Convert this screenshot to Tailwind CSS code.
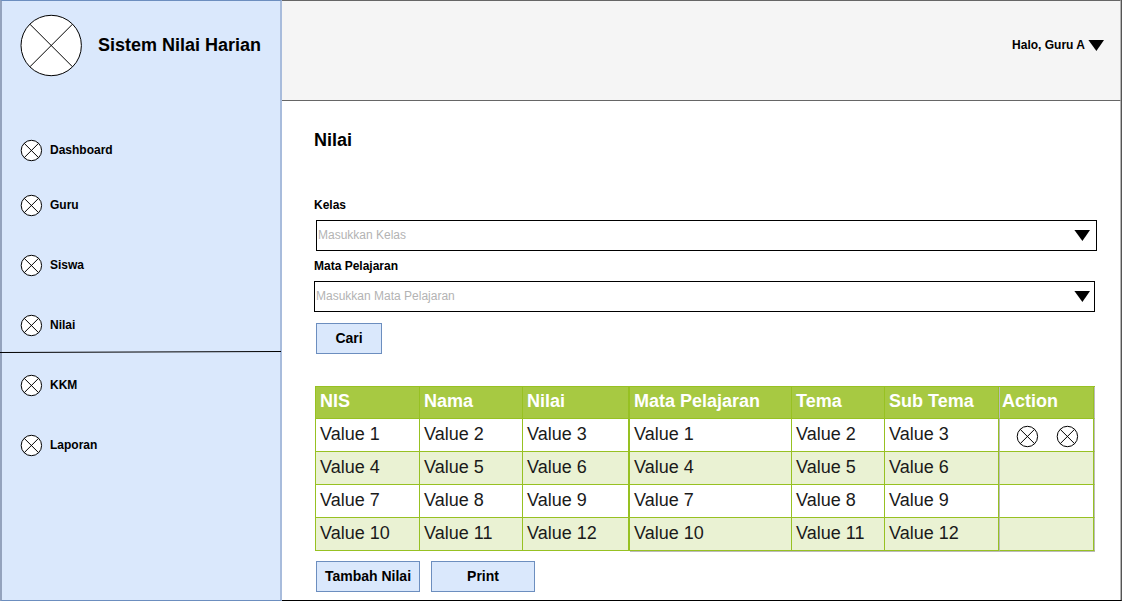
<!DOCTYPE html>
<html lang="id">
<head>
<meta charset="utf-8">
<meta name="viewport" content="width=device-width, initial-scale=1">
<title>Sistem Nilai Harian</title>
<script src="https://cdn.jsdelivr.net/npm/@tailwindcss/browser@4"></script>
</head>
<body class="flex min-h-screen bg-white font-['Liberation_Sans',Arial,sans-serif] text-xs text-black">
<svg class="hidden" aria-hidden="true">
  <symbol id="cross" viewBox="0 0 23 23">
    <circle cx="11.4" cy="11.5" r="10.2" fill="#fff" stroke="#000"/>
    <path d="M4.2 4.3 18.6 18.7M18.6 4.3 4.2 18.7" stroke="#000" fill="none"/>
  </symbol>
  <symbol id="down" viewBox="0 0 16 11"><path d="M.4 0H16L8.4 11Z" fill="#000"/></symbol>
</svg>

<aside class="flex w-[282px] shrink-0 flex-col border-x-2 border-y border-y-[#6c8ebf] border-r-[#a8bcdc] border-l-[#94a3bd] bg-[#dae8fc]">
  <div class="flex items-center gap-[15px] pt-[13px] pl-[18px]">
    <svg class="size-[63px] shrink-0" viewBox="0 0 63 63" aria-hidden="true">
      <circle cx="31.2" cy="31.5" r="30.2" fill="#fff" stroke="#000"/>
      <path d="M9.9 10.2 52.5 52.8M52.5 10.2 9.9 52.8" stroke="#000" fill="none"/>
    </svg>
    <span class="pb-[2px] text-lg/6 font-bold">Sistem Nilai Harian</span>
  </div>
  <nav class="mt-[62px] flex flex-col font-bold">
    <a href="#" class="ml-[18px] flex items-start gap-[7px]"><svg class="size-[23px]"><use href="#cross"/></svg><span class="pt-[3px]">Dashboard</span></a>
    <a href="#" class="mt-8 ml-[18px] flex items-start gap-[7px]"><svg class="size-[23px]"><use href="#cross"/></svg><span class="pt-[3px]">Guru</span></a>
    <a href="#" class="mt-[37px] ml-[18px] flex items-start gap-[7px]"><svg class="size-[23px]"><use href="#cross"/></svg><span class="pt-[3px]">Siswa</span></a>
    <a href="#" class="mt-[37px] ml-[18px] flex items-start gap-[7px]"><svg class="size-[23px]"><use href="#cross"/></svg><span class="pt-[3px]">Nilai</span></a>
    <svg class="mt-[14px] -ml-[2px] h-[2px] w-[281px]" viewBox="0 0 281 2" preserveAspectRatio="none" aria-hidden="true"><path d="M0 1.5 281 .5" stroke="#000" fill="none"/></svg>
    <a href="#" class="mt-[21px] ml-[18px] flex items-start gap-[7px]"><svg class="size-[23px]"><use href="#cross"/></svg><span class="pt-[3px]">KKM</span></a>
    <a href="#" class="mt-[37px] ml-[18px] flex items-start gap-[7px]"><svg class="size-[23px]"><use href="#cross"/></svg><span class="pt-[3px]">Laporan</span></a>
  </nav>
</aside>

<div class="flex min-w-0 flex-1 flex-col border-r border-b border-r-[#555] border-b-black">
  <header class="flex h-[101px] items-start justify-end border-y border-r border-y-[#666] border-r-[#b5b5b5] bg-[#f5f5f5] pt-9 pr-4">
    <button type="button" class="flex items-center gap-[3px] font-bold">Halo, Guru A<svg class="h-[11px] w-4" aria-hidden="true"><use href="#down"/></svg></button>
  </header>

  <main class="flex flex-1 flex-col border-r border-[#b5b5b5] pt-[27px] pr-[23px] pb-2 pl-8">
    <h1 class="text-lg/6 font-bold">Nilai</h1>

    <form class="mt-[45px] flex flex-col items-start">
      <label for="kelas" class="font-bold">Kelas</label>
      <div class="relative mt-[7px] w-full pl-[2px]">
        <select id="kelas" class="block h-[31px] w-full appearance-none border border-black bg-white pr-8 pb-[2px] pl-px text-[#b3b3b3]"><option>Masukkan Kelas</option></select>
        <svg class="pointer-events-none absolute top-[10px] right-[7px] h-[11px] w-4" aria-hidden="true"><use href="#down"/></svg>
      </div>
      <label for="mapel" class="mt-[7px] font-bold">Mata Pelajaran</label>
      <div class="relative mt-[7px] w-full pr-[2px]">
        <select id="mapel" class="block h-[31px] w-full appearance-none border border-black bg-white pr-8 pb-[2px] pl-px text-[#b3b3b3]"><option>Masukkan Mata Pelajaran</option></select>
        <svg class="pointer-events-none absolute top-[10px] right-[7px] h-[11px] w-4" aria-hidden="true"><use href="#down"/></svg>
      </div>
      <button type="button" class="mt-[11px] ml-[2px] h-[31px] w-[66px] border border-[#6c8ebf] bg-[#dae8fc] pb-[2px] text-sm font-bold">Cari</button>
    </form>

    <div class="mt-8 pr-[2px] pl-px">
      <table class="w-full table-fixed border-separate border-spacing-0 border-t border-l border-[#97c122] text-left text-lg [&_td]:border-r [&_td]:border-b [&_td]:border-[#97c122] [&_td]:p-0 [&_td]:pl-1 [&_td]:align-top [&_td]:leading-[30px] [&_td]:text-[#1a1a1a] [&_th]:border-r [&_th]:border-b [&_th]:border-[#97c122] [&_th]:pl-1 [&_th]:align-top [&_th]:leading-7 [&_tr>:nth-child(3)]:border-r-2 [&_tr>:nth-child(6)]:border-r-[#bbb] [&_tr>:nth-child(6)]:shadow-[inset_-1px_0_#97c122] [&_tr>:nth-child(7)]:border-r-[#bbb] [&_tr>:nth-child(7)]:shadow-[inset_-1px_0_#97c122] [&_tbody>tr:last-child>:nth-child(4)]:shadow-[0_1px_#bbb] [&_tbody>tr:last-child>:nth-child(5)]:shadow-[0_1px_#bbb] [&_tbody>tr:last-child>:nth-child(6)]:shadow-[inset_-1px_0_#97c122,0_1px_#bbb] [&_tbody>tr:last-child>:nth-child(7)]:shadow-[inset_-1px_0_#97c122,0_1px_#bbb]">
        <colgroup><col class="w-[104px]"><col class="w-[103px]"><col class="w-[107px]"><col class="w-[162px]"><col class="w-[93px]"><col class="w-[115px]"><col class="w-[95px]"></colgroup>
        <thead>
          <tr class="h-8 bg-[#a7c942] text-white"><th>NIS</th><th>Nama</th><th>Nilai</th><th>Mata Pelajaran</th><th>Tema</th><th>Sub Tema</th><th class="pl-[2px]!">Action</th></tr>
        </thead>
        <tbody>
          <tr class="h-[33px]"><td>Value 1</td><td>Value 2</td><td>Value 3</td><td>Value 1</td><td>Value 2</td><td>Value 3</td>
            <td><div class="flex gap-[17px] pt-[6px] pl-3"><button type="button" aria-label="Aksi 1"><svg class="size-[23px]"><use href="#cross"/></svg></button><button type="button" aria-label="Aksi 2"><svg class="size-[23px]"><use href="#cross"/></svg></button></div></td></tr>
          <tr class="h-[33px] bg-[#eaf2d3]"><td>Value 4</td><td>Value 5</td><td>Value 6</td><td>Value 4</td><td>Value 5</td><td>Value 6</td><td></td></tr>
          <tr class="h-[33px]"><td>Value 7</td><td>Value 8</td><td>Value 9</td><td>Value 7</td><td>Value 8</td><td>Value 9</td><td></td></tr>
          <tr class="h-[33px] bg-[#eaf2d3]"><td>Value 10</td><td>Value 11</td><td>Value 12</td><td>Value 10</td><td>Value 11</td><td>Value 12</td><td></td></tr>
        </tbody>
      </table>
    </div>

    <div class="mt-[10px] ml-[2px] flex gap-[11px] text-sm font-bold">
      <button type="button" class="h-[31px] w-[104px] border border-[#6c8ebf] bg-[#dae8fc] pb-[2px]">Tambah Nilai</button>
      <button type="button" class="h-[31px] w-[104px] border border-[#6c8ebf] bg-[#dae8fc] pb-[2px]">Print</button>
    </div>
  </main>
</div>
</body>
</html>
